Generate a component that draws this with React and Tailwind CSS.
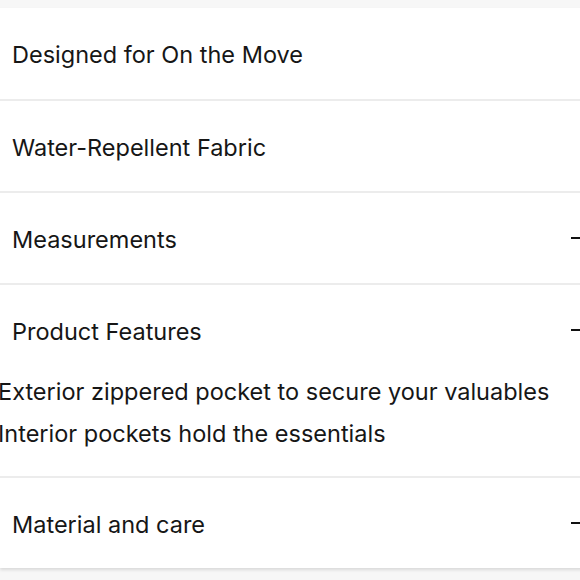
const rows = [
  { title: 'Designed for On the Move', icon: false },
  { title: 'Water-Repellent Fabric', icon: false },
  { title: 'Measurements', icon: true },
  {
    title: 'Product Features',
    icon: true,
    items: ['Exterior zippered pocket to secure your valuables', 'Interior pockets hold the essentials'],
  },
  { title: 'Material and care', icon: true },
];

function Minus() {
  return <span className="block h-[2px] w-[12px] bg-[#111]" />;
}

export default function App() {
  return (
    <div
      className="h-[580px] w-[580px] overflow-hidden bg-[#f7f7f7] pt-2 text-[#161616]"
      style={{ fontFamily: 'Inter, "Noto Sans", sans-serif' }}
    >
      <div className="w-[593px] bg-white shadow-[0_2px_3px_rgba(0,0,0,0.12)]">
        {rows.map((row, i) => (
          <div key={row.title} className={i > 0 ? 'border-t-2 border-[#ececec]' : ''}>
            <div
              className={`flex items-center justify-between pl-3 pr-[10px] ${i === 0 ? 'h-[91px]' : 'h-[90px]'}`}
            >
              <span className="pt-[3px] text-[23.5px] leading-none">{row.title}</span>
              {row.icon && <Minus />}
            </div>
            {row.items && (
              <ul className="-mt-[4px] ml-[-2px] pb-[21px]">
                {row.items.map((item) => (
                  <li key={item} className="whitespace-nowrap text-[23.5px] leading-[42px]">
                    {item}
                  </li>
                ))}
              </ul>
            )}
          </div>
        ))}
      </div>
    </div>
  );
}
